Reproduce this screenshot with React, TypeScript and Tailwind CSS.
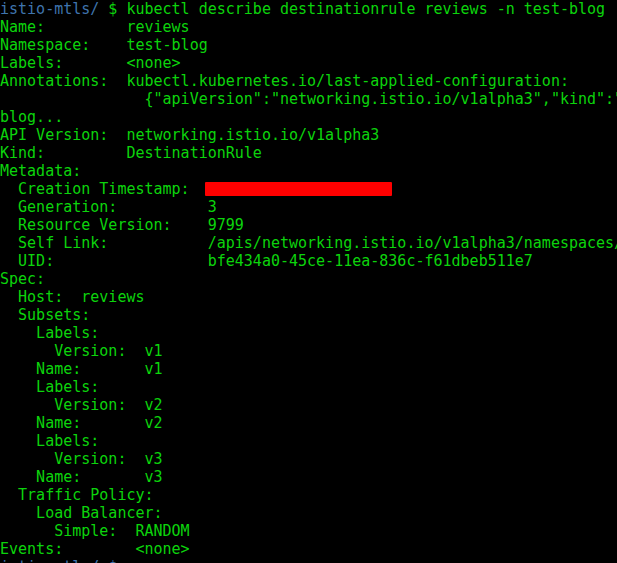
const lines: string[] = [
  'Name:         reviews',
  'Namespace:    test-blog',
  'Labels:       <none>',
  'Annotations:  kubectl.kubernetes.io/last-applied-configuration:',
  '                {"apiVersion":"networking.istio.io/v1alpha3","kind":"DestinationRule","metadata":{"annotations":{},"name":"reviews","namespace":"test-',
  'blog...',
  'API Version:  networking.istio.io/v1alpha3',
  'Kind:         DestinationRule',
  'Metadata:',
];

const lines2: string[] = [
  '  Generation:          3',
  '  Resource Version:    9799',
  '  Self Link:           /apis/networking.istio.io/v1alpha3/namespaces/test-blog/destinationrules/reviews',
  '  UID:                 bfe434a0-45ce-11ea-836c-f61dbeb511e7',
  'Spec:',
  '  Host:  reviews',
  '  Subsets:',
  '    Labels:',
  '      Version:  v1',
  '    Name:       v1',
  '    Labels:',
  '      Version:  v2',
  '    Name:       v2',
  '    Labels:',
  '      Version:  v3',
  '    Name:       v3',
  '  Traffic Policy:',
  '    Load Balancer:',
  '      Simple:  RANDOM',
  'Events:        <none>',
];

export default function App() {
  return (
    <div
      className="w-[617px] h-[563px] overflow-hidden bg-black text-[15px] leading-[18px] text-[#0cd40c] whitespace-pre"
      style={{ fontFamily: '"DejaVu Sans Mono", "Liberation Mono", monospace' }}
    >
      <div>
        <span className="text-[#3f74ad]">istio-mtls/</span> $ kubectl describe destinationrule reviews -n test-blog
      </div>
      {lines.map((l, i) => (
        <div key={i}>{l}</div>
      ))}
      <div className="flex items-center">
        <span>{'  Creation Timestamp:  '}</span>
        <span className="inline-block w-[187px] h-[14px] bg-[#ff0000] rounded-[1px] ml-[-3px]" />
      </div>
      {lines2.map((l, i) => (
        <div key={i}>{l}</div>
      ))}
      <div className="text-[#3f74ad]">istio-mtls/ $</div>
    </div>
  );
}
